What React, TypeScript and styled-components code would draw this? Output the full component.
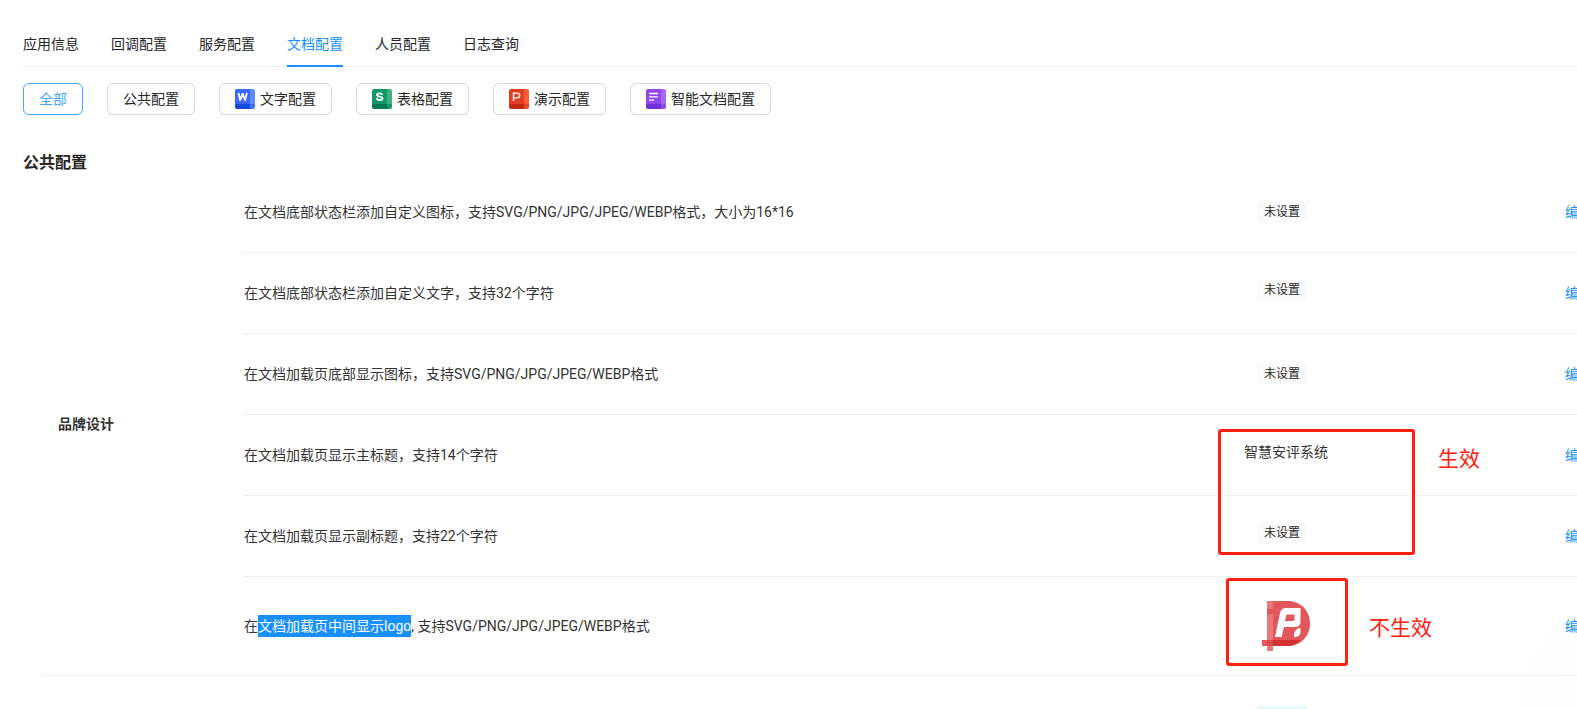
import React from 'react';
import styled, { createGlobalStyle, css } from 'styled-components';

const Global = createGlobalStyle`
  *, *::before, *::after { box-sizing: border-box; }
  body {
    margin: 0;
    background: #fff;
    color: #262626;
    font-family: Roboto, "Noto Sans CJK SC", sans-serif;
    font-size: 14px;
    line-height: 22px;
  }
  button { font: inherit; }
`;

const Page = styled.main`
  height: 100vh;
  overflow: hidden;
  padding: 20px 0 0 23px;
  background: radial-gradient(circle at calc(100% + 60px) 100%, #fbfbfb 0, #fefefe 100px, #fff 120px);
`;

const Tabs = styled.nav`
  display: flex;
  gap: 32px;
  border-bottom: 1px solid #f0f0f0;
`;

const Tab = styled.a<{ $active?: boolean }>`
  padding: 13px 0 10px;
  margin-bottom: -1px;
  border-bottom: 2px solid ${p => (p.$active ? '#1890ff' : 'transparent')};
  color: ${p => (p.$active ? '#1890ff' : '#262626')};
  text-decoration: none;
  white-space: nowrap;
`;

const Filters = styled.div`
  display: flex;
  gap: 24px;
  margin-top: 16px;
`;

const Filter = styled.button<{ $active?: boolean }>`
  display: flex;
  align-items: center;
  gap: 5px;
  height: 32px;
  padding: 0 15px;
  border: 1px solid ${p => (p.$active ? '#40a9ff' : '#d9d9d9')};
  border-radius: 6px;
  background: #fff;
  box-shadow: 0 2px 0 rgba(0, 0, 0, 0.02);
  color: ${p => (p.$active ? '#40a9ff' : '#262626')};
  white-space: nowrap;
`;

const Heading = styled.h2`
  margin: 39px 0 0;
  font-size: 16px;
  line-height: 18px;
  font-weight: 700;
`;

const Board = styled.section`
  position: relative;
  margin-left: 20px;
`;

const Table = styled.table`
  width: calc(100% + 48px);
  table-layout: fixed;
  border-collapse: separate;
  border-spacing: 0;
  color: #333;
`;

const GroupCol = styled.col`width: 201px;`;
const ValueCol = styled.col`width: 200px;`;
const ActionCol = styled.col`width: 239px;`;

const cell = css`
  padding: 0;
  border-bottom: 1px solid #f0f0f0;
  vertical-align: middle;
`;

const GroupCell = styled.th`
  ${cell}
  padding-left: 15px;
  text-align: left;
  font-weight: 700;
`;

const Row = styled.tr<{ $tall?: boolean }>`
  height: ${p => (p.$tall ? 99 : 81)}px;
`;

const DescCell = styled.td`
  ${cell}
  white-space: nowrap;
`;

const ValueCell = styled.td<{ $editable?: boolean }>`
  ${cell}
  padding-bottom: ${p => (p.$editable ? 6 : 0)}px;
  text-align: center;
`;

const ActionCell = styled.td`
  ${cell}
  padding-right: 32px;
  text-align: right;
`;

const Tag = styled.span<{ $info?: boolean }>`
  display: block;
  width: 50px;
  height: 20px;
  margin: 0 auto;
  border-radius: 2px;
  background: ${p => (p.$info ? '#e6f7ff' : '#fafafa')};
  color: #262626;
  font-size: 12px;
  line-height: 21px;
`;

const TagSlot = styled.div`
  padding-right: 8px;
`;

const Edit = styled.a`
  color: #1890ff;
  text-decoration: none;
`;

const Selected = styled.mark`
  padding: 3px 0;
  background: #1890ff;
  color: #fff;
`;

const Logo = styled.svg`
  display: block;
  margin: 0 auto;
`;

const Frame = styled.div<{ $top: number; $right: number; $w: number; $h: number }>`
  position: absolute;
  top: ${p => p.$top}px;
  right: ${p => p.$right}px;
  width: ${p => p.$w}px;
  height: ${p => p.$h}px;
  border: 3px solid #ff2010;
  border-radius: 3px;
  pointer-events: none;
`;

const Note = styled.span<{ $top: number; $right: number }>`
  position: absolute;
  top: ${p => p.$top}px;
  right: ${p => p.$right}px;
  color: #ff2010;
  font-size: 21px;
  line-height: 30px;
`;

type Palette = { main: string; side: string; foot: string; corner: string };

const palettes: Record<string, Palette> = {
  W: { main: '#3a68fb', side: '#5c8cff', foot: '#1548dd', corner: '#3c72fb' },
  S: { main: '#119a68', side: '#3cb480', foot: '#067a50', corner: '#1a9a68' },
  P: { main: '#e33d22', side: '#ff5a36', foot: '#c22814', corner: '#e84428' },
  D: { main: '#9046f0', side: '#a866ff', foot: '#7430d8', corner: '#9048f0' },
};

function AppIcon({ kind }: { kind: string }) {
  const p = palettes[kind];
  const clip = `book-${kind}`;
  return (
    <svg width="20" height="20" viewBox="0 0 20 20" aria-hidden="true">
      <clipPath id={clip}><rect width="20" height="20" rx="2" /></clipPath>
      <g clipPath={`url(#${clip})`}>
        <rect width="15" height="15" fill={p.main} />
        <rect x="15" width="5" height="15" fill={p.side} />
        <rect y="15" width="15" height="5" fill={p.foot} />
        <rect x="15" y="15" width="5" height="5" fill={p.corner} />
      </g>
      <g fill="none" stroke="#fff" strokeWidth="1.8">
        {kind === 'W' && <path d="M3.500 4l1.500 6.800h.3L7.500 5h.2l2.200 5.800h.3L11.800 4" />}
        {kind === 'S' && <path d="M10.300 5.900C9.800 4.700 8.700 4.400 7.500 4.400c-1.600 0-2.500.6-2.500 1.600 0 2.300 5.400 1.100 5.400 3.400 0 1.200-1.200 1.700-2.800 1.700-1.500 0-2.600-.6-2.900-1.800" />}
        {kind === 'P' && <path d="M4.500 12V4.100h3.300c1.800 0 2.900.9 2.900 2.400S9.600 8.900 7.800 8.900H4.500" strokeWidth="1.400" />}
        {kind === 'D' && <path d="M3 4.500h9M3 7.800h9M3 11.200h5" strokeWidth="1.300" />}
      </g>
    </svg>
  );
}

function BrandLogo() {
  return (
    <Logo width="48" height="50" viewBox="0 0 48 50" role="img" aria-label="logo">
      <path d="M5 0h20.500C39 0 48 10 48 22.500S39 45 25.500 45H5z" fill="#e2575a" />
      <path d="M11 39h27.500C35 43 31 45 25.500 45H11z" fill="#d03232" />
      <rect y="39" width="11" height="6" fill="#e2575a" />
      <rect x="5" width="6" height="50" fill="#e87a7c" />
      <rect x="5" y="8" width="6" height="5" fill="#e2575a" />
      <rect x="5" y="39" width="6" height="6" fill="#d94a4c" />
      <path d="M13 36l5-24c1-3.500 2.500-5 5.500-5H38.500v13c0 4-2 6-6 6H22l-2.500 10zM24.500 13.500L23 20h7.500c1.500 0 2-.6 2-2v-4.500z" fill="#fff" fillRule="evenodd" />
      <path d="M38.500 27v4c0 3-2 5-6.500 5v-2c0-4 3-7 6.500-7z" fill="#fff" />
    </Logo>
  );
}

const tabs = ['应用信息', '回调配置', '服务配置', '文档配置', '人员配置', '日志查询'];

const filters: { label: string; kind?: string }[] = [
  { label: '全部' },
  { label: '公共配置' },
  { label: '文字配置', kind: 'W' },
  { label: '表格配置', kind: 'S' },
  { label: '演示配置', kind: 'P' },
  { label: '智能文档配置', kind: 'D' },
];

const unset = <TagSlot><Tag>未设置</Tag></TagSlot>;

const rows: { desc: React.ReactNode; value: React.ReactNode; editable?: boolean; tall?: boolean }[] = [
  { desc: '在文档底部状态栏添加自定义图标，支持SVG/PNG/JPG/JPEG/WEBP格式，大小为16*16', value: unset },
  { desc: '在文档底部状态栏添加自定义文字，支持32个字符', value: unset, editable: true },
  { desc: '在文档加载页底部显示图标，支持SVG/PNG/JPG/JPEG/WEBP格式', value: unset },
  { desc: '在文档加载页显示主标题，支持14个字符', value: '智慧安评系统', editable: true },
  { desc: '在文档加载页显示副标题，支持22个字符', value: unset, editable: true },
  {
    desc: <>在<Selected>文档加载页中间显示logo</Selected>, 支持SVG/PNG/JPG/JPEG/WEBP格式</>,
    value: <BrandLogo />,
    tall: true,
  },
];

export default function App() {
  return (
    <Page>
      <Global />
      <Tabs>
        {tabs.map(t => (
          <Tab key={t} href="#" $active={t === '文档配置'}>{t}</Tab>
        ))}
      </Tabs>
      <Filters>
        {filters.map((f, i) => (
          <Filter key={f.label} type="button" $active={i === 0}>
            {f.kind && <AppIcon kind={f.kind} />}
            {f.label}
          </Filter>
        ))}
      </Filters>
      <Heading>公共配置</Heading>
      <Board>
        <Table>
          <colgroup>
            <GroupCol />
            <col />
            <ValueCol />
            <ActionCol />
          </colgroup>
          <tbody>
            {rows.map((r, i) => (
              <Row key={i} $tall={r.tall}>
                {i === 0 && <GroupCell scope="rowgroup" rowSpan={rows.length}>品牌设计</GroupCell>}
                <DescCell>{r.desc}</DescCell>
                <ValueCell $editable={r.editable}>{r.value}</ValueCell>
                <ActionCell><Edit href="#">编辑</Edit></ActionCell>
              </Row>
            ))}
          </tbody>
          <tbody>
            <Row>
              <GroupCell scope="rowgroup" />
              <DescCell />
              <ValueCell><TagSlot><Tag $info /></TagSlot></ValueCell>
              <ActionCell />
            </Row>
          </tbody>
        </Table>
        <Frame $top={257} $right={162} $w={197} $h={126} />
        <Note $top={272} $right={97}>生效</Note>
        <Frame $top={406} $right={229} $w={122} $h={88} />
        <Note $top={441} $right={145}>不生效</Note>
      </Board>
    </Page>
  );
}
